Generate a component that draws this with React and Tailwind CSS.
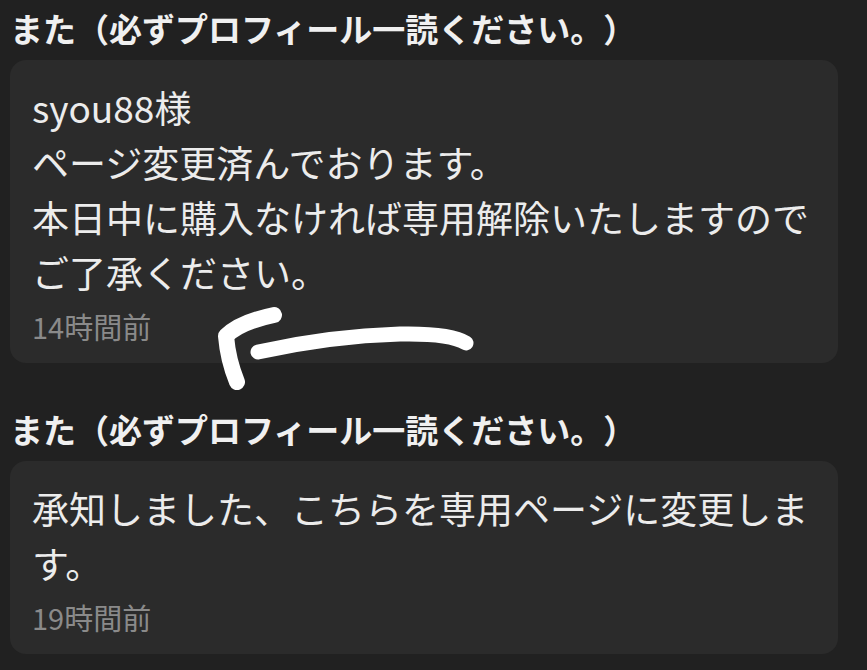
import React from 'react';

const comments = [
  {
    name: 'また（必ずプロフィール一読ください。）',
    lines: ['syou88様', 'ページ変更済んでおります。', '本日中に購入なければ専用解除いたしますのでご了承ください。'],
    time: '14時間前',
  },
  {
    name: 'また（必ずプロフィール一読ください。）',
    lines: ['承知しました、こちらを専用ページに変更します。'],
    time: '19時間前',
  },
];

const Comment = ({ name, lines, time, first }) => (
  <div className={first ? 'pt-[3px]' : 'mt-[41px]'}>
    <h3 className="text-[33px] leading-[50px] font-bold text-[#f0f0f0]">{name}</h3>
    <div className="mt-[7px] bg-[#2b2b2b] rounded-[16px] pl-[22px] pr-[22px] pt-[20px] pb-[17px]">
      {lines.map((l, i) => (
        <p key={i} className="text-[37px] leading-[55px] text-[#ececec]">
          {l}
        </p>
      ))}
      <p className="mt-[6px] text-[29px] leading-[40px] text-[#8a8a8a]">{time}</p>
    </div>
  </div>
);

export default function App() {
  return (
    <div
      className="relative w-[867px] h-[670px] overflow-hidden bg-[#212121] pl-[10px] pr-[29px] [text-spacing-trim:space-all]"
      style={{ fontFamily: '"Noto Sans CJK JP", "Noto Sans", sans-serif' }}
    >
      {comments.map((c, i) => (
        <Comment key={i} {...c} first={i === 0} />
      ))}

      {/* hand-drawn arrow scribbled over the screenshot */}
      <svg className="absolute left-0 top-0 pointer-events-none" width="867" height="670">
        <path
          d="M258 352 Q 330 336 400 334 Q 450 333 466 343"
          stroke="#ffffff"
          strokeWidth="15"
          strokeLinecap="round"
          fill="none"
        />
        <path
          d="M274 315 Q 240 322 226 336 Q 228 360 237 382"
          stroke="#ffffff"
          strokeWidth="16"
          strokeLinecap="round"
          strokeLinejoin="round"
          fill="none"
        />
      </svg>
    </div>
  );
}
